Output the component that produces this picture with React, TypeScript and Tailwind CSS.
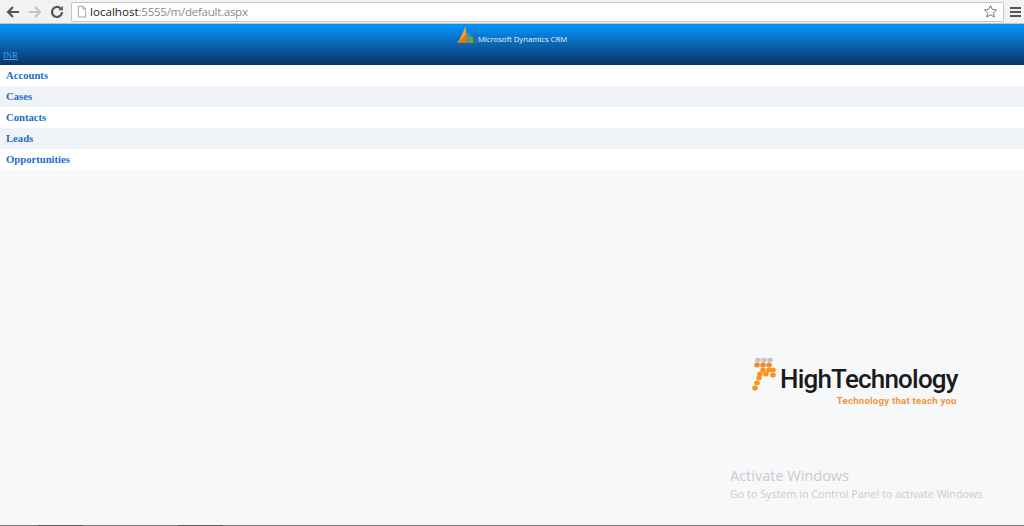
import React from "react";

const rows = ["Accounts", "Cases", "Contacts", "Leads", "Opportunities"];

const dots: [number, number, string][] = [
  [758, 360, "#c9c3bb"], [764, 360, "#c9c3bb"], [770, 360, "#c9c3bb"],
  [757, 365, "#f08a24"], [763, 365, "#f08a24"], [769, 365, "#f08a24"],
  [763, 370, "#f7931e"], [769, 370, "#f7931e"], [773, 370, "#f7931e"],
  [760, 374, "#f7931e"], [766, 374, "#f7931e"], [773, 375, "#f7931e"],
  [759, 378, "#f7931e"], [757, 383, "#f7931e"], [755, 388, "#f7931e"],
];

function MarkDots() {
  return (
    <svg width="30" height="36" viewBox="750 358 30 36" className="shrink-0">
      {dots.map(([x, y, c], i) => (
        <ellipse key={i} cx={x} cy={y} rx="2.8" ry="2.5" fill={c} />
      ))}
    </svg>
  );
}

function CrmMark() {
  return (
    <svg width="21" height="19" viewBox="0 0 21 19" className="shrink-0">
      <path d="M0 17 C3 13 6 7 8.5 0 L10 17 Z" fill="#f5a623" />
      <path d="M0 17 C3 15 6 12 9 8 L10 17 Z" fill="#e2701c" />
      <path d="M10 6 L13 8 L13 17 L10 17 Z" fill="#3f9c8f" />
      <path d="M13 10 L16 11 L16 17 L13 17 Z" fill="#7aa52c" />
      <path d="M16 11 L20 6 L20 17 L16 17 Z" fill="#2e6f9e" />
    </svg>
  );
}

export default function App() {
  return (
    <div className="relative h-[526px] w-[1024px] overflow-hidden bg-[#f7f8fa] font-['Liberation_Serif',serif]">
      <div className="flex h-6 items-center border-b border-b-[#c4c4c4] bg-[#f2f2f2] pl-[5px] pr-[3px]">
        <svg width="16" height="16" viewBox="0 0 16 16" className="mr-[6px] shrink-0" fill="none" stroke="#555" strokeWidth="2.2">
          <path d="M14 8H3M8 3 3 8l5 5" />
        </svg>
        <svg width="16" height="16" viewBox="0 0 16 16" className="mr-[6px] shrink-0" fill="none" stroke="#c4c4c4" strokeWidth="2.2">
          <path d="M2 8h11M8 3l5 5-5 5" />
        </svg>
        <svg width="16" height="16" viewBox="0 0 16 16" className="mr-[6px] shrink-0" fill="none" stroke="#555" strokeWidth="2.2">
          <path d="M13 8a5 5 0 1 1-1.6-3.7" />
          <path d="M13.8 1.8v4.4H9.4z" fill="#555" stroke="none" />
        </svg>
        <div className="flex h-[20px] flex-1 items-center rounded-[2px] border border-[#c6c6c6] bg-white pl-[5px] pr-[4px]">
          <svg width="10" height="13" viewBox="0 0 11 13" className="mr-[3px] shrink-0" fill="#fff" stroke="#999">
            <path d="M1.5.5h5l3 3v9h-8zM6.5.5v3h3" />
          </svg>
          <span className="font-['Open_Sans',sans-serif] text-[11.6px] leading-none tracking-[-0.3px] text-[#8a8a8a]">
            <span className="tracking-normal text-[#222]">localhost</span>:5555/m/default.aspx
          </span>
          <svg width="15" height="15" viewBox="0 0 24 24" className="ml-auto mr-[1px] shrink-0" fill="#fff" stroke="#777" strokeWidth="1.6">
            <path d="m12 2.5 2.9 6.2 6.8.8-5 4.6 1.3 6.7-6-3.4-6 3.4 1.3-6.7-5-4.6 6.8-.8z" />
          </svg>
        </div>
        <div className="ml-[6px] flex w-[11px] shrink-0 flex-col gap-[2px]">
          <div className="h-[2px] bg-[#555]" />
          <div className="h-[2px] bg-[#555]" />
          <div className="h-[2px] bg-[#555]" />
        </div>
      </div>

      <div className="h-[41px] bg-gradient-to-b from-[#0090f5] from-[8%] to-[#0a3466]">
        <div className="flex h-[21px] items-end justify-center">
          <CrmMark />
          <span className="mb-[1px] font-['Open_Sans',sans-serif] text-[7.7px] leading-[10px] text-[#eaf3fb]">Microsoft Dynamics CRM</span>
        </div>
        <div className="pl-[3px] pt-[5px] text-[8.6px] leading-[11px] text-[#4ea3ee] underline">INR</div>
      </div>

      {rows.map((r, i) => (
        <div key={r} className={`flex h-[21px] items-center pb-[2px] pl-[6px] text-[10.67px] font-bold text-[#1d6fc4] ${i % 2 ? "bg-[#eff2f7]" : "bg-white"}`}>
          {r}
        </div>
      ))}

      <div className="absolute left-[750px] top-[358px] flex">
        <MarkDots />
        <div className="flex flex-col">
          <span className="mt-[5px] font-['Roboto',sans-serif] text-[26px] font-medium leading-[32px] tracking-[-0.8px] text-[#1a1a1a]">HighTechnology</span>
          <span className="self-end pr-[1px] font-['Roboto',sans-serif] text-[9.6px] font-bold leading-[12px] tracking-[0.25px] text-[#f0953a]">Technology that teach you</span>
        </div>
      </div>

      <div className="absolute left-[730px] top-[467px] font-['Open_Sans',sans-serif] text-[#c9cbce]">
        <div className="text-[14.5px] leading-[18px]">Activate Windows</div>
        <div className="text-[10.75px] leading-[18px]">Go to System in Control Panel to activate Windows.</div>
      </div>

      <div className="absolute bottom-0 left-0 flex h-[1px] w-full bg-[#7b7b7b]">
        <div className="ml-[38px] w-[45px] bg-[#555]" />
        <div className="ml-[95px] w-[45px] bg-[#555]" />
      </div>
    </div>
  );
}
